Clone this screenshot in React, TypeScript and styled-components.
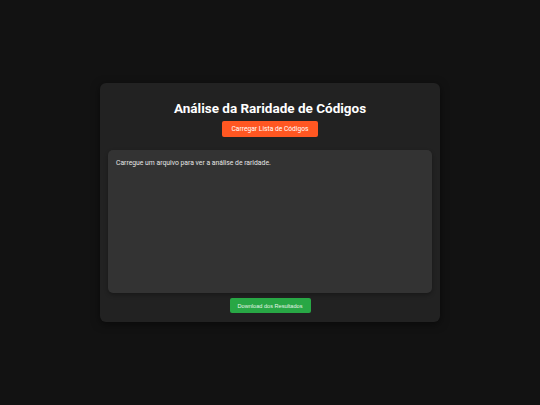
import React from 'react';
import styled, { createGlobalStyle } from 'styled-components';

const GlobalStyle = createGlobalStyle`
  html, body {
    margin: 0;
    padding: 0;
    background: #121212;
    font-family: Roboto, "Liberation Sans", sans-serif;
    color: #e0e0e0;
  }
`;

const Page = styled.div`
  min-height: 100vh;
  display: flex;
  align-items: center;
  justify-content: center;
`;

const Card = styled.div`
  width: 340px;
  box-sizing: border-box;
  padding: 17px 8px 9px;
  background: #222222;
  border-radius: 6px;
  box-shadow: 0 2px 8px rgba(0, 0, 0, 0.5);
  display: flex;
  flex-direction: column;
  align-items: center;
`;

const Title = styled.h1`
  margin: 0 0 5px;
  font-size: 13.5px;
  font-weight: 700;
  color: #ffffff;
  line-height: 16px;
`;

const Button = styled.button<{ $tone: 'orange' | 'green' }>`
  border: 0;
  border-radius: 2px;
  padding: 0 ${p => (p.$tone === 'orange' ? 9 : 8)}px;
  height: ${p => (p.$tone === 'orange' ? 16 : 15)}px;
  font-size: ${p => (p.$tone === 'orange' ? 6.7 : 5.6)}px;
  font-weight: 400;
  color: ${p => (p.$tone === 'orange' ? '#ffffff' : '#e4f4e7')};
  cursor: pointer;
  background: ${p => (p.$tone === 'orange' ? '#ff5722' : '#28a745')};
  font-family: ${p => (p.$tone === 'orange' ? 'Roboto, sans-serif' : '"Liberation Sans", Arial, sans-serif')};
`;

const Results = styled.div`
  align-self: stretch;
  margin: 13px 0 5px;
  height: 143px;
  box-sizing: border-box;
  padding: 8px 8px;
  background: #333333;
  border-radius: 5px;
  box-shadow: 0 2px 4px rgba(0, 0, 0, 0.3);
  font-size: 6.8px;
  line-height: 10px;
  color: #e6e6e6;
`;

export default function App() {
  return (
    <>
      <GlobalStyle />
      <Page>
        <Card>
          <Title>Análise da Raridade de Códigos</Title>
          <Button $tone="orange">Carregar Lista de Códigos</Button>
          <Results>Carregue um arquivo para ver a análise de raridade.</Results>
          <Button $tone="green">Download dos Resultados</Button>
        </Card>
      </Page>
    </>
  );
}
